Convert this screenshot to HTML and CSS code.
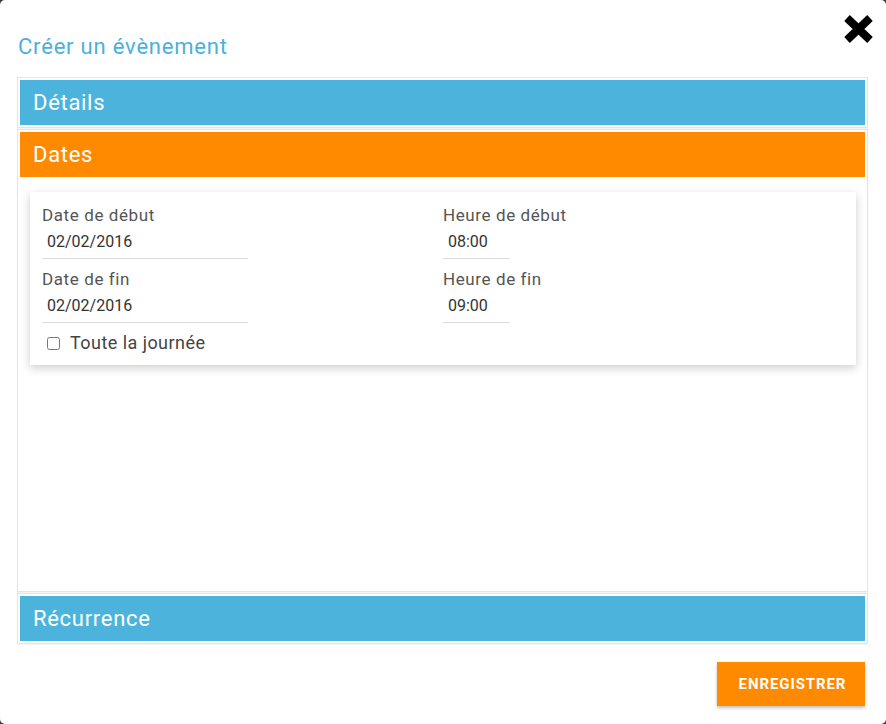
FILE: index.html
```html
<!DOCTYPE html>
<html lang="fr">
<head>
<meta charset="utf-8">
<title>Créer un évènement</title>
<link rel="stylesheet" href="styles.css">
</head>
<body>
<div class="modal">
  <button class="close" aria-label="Fermer">
    <svg width="31" height="30" viewBox="0 0 31 30"><path d="M4 4 L27 26 M27 4 L4 26" stroke="#000" stroke-width="8" fill="none"/></svg>
  </button>
  <h1 class="title">Créer un évènement</h1>
  <div class="panels">
    <section class="panel">
      <div class="panel-heading blue">Détails</div>
    </section>
    <section class="panel">
      <div class="panel-heading orange">Dates</div>
      <div class="panel-body">
        <div class="card">
          <div class="col">
            <div class="field">
              <div class="label">Date de début</div>
              <div class="input date">02/02/2016</div>
            </div>
            <div class="field last">
              <div class="label">Date de fin</div>
              <div class="input date">02/02/2016</div>
            </div>
            <label class="check"><input type="checkbox"><span>Toute la journée</span></label>
          </div>
          <div class="col">
            <div class="field">
              <div class="label">Heure de début</div>
              <div class="input time">08:00</div>
            </div>
            <div class="field last">
              <div class="label">Heure de fin</div>
              <div class="input time">09:00</div>
            </div>
          </div>
        </div>
      </div>
    </section>
    <section class="panel">
      <div class="panel-heading blue">Récurrence</div>
    </section>
  </div>
  <div class="actions">
    <button class="save">ENREGISTRER</button>
  </div>
</div>
</body>
</html>
```

FILE: styles.css
```css
* { box-sizing: border-box; }
html, body { margin: 0; padding: 0; }
body {
  background: #3a3a3a;
  font-family: Roboto, "Liberation Sans", sans-serif;
  width: 886px;
  height: 724px;
  overflow: hidden;
}
.modal {
  position: relative;
  width: 886px;
  height: 724px;
  background: #fff;
  border-radius: 5px;
  padding-top: 32px;
}
.close {
  position: absolute;
  top: 14px;
  right: 12px;
  border: 0;
  background: transparent;
  padding: 0;
  width: 31px;
  height: 30px;
}
.close svg { display: block; }
.title {
  margin: 0 0 15px 18px;
  font-size: 22px;
  line-height: 30px;
  font-weight: 400;
  letter-spacing: 0.8px;
  color: #4ab1dc;
}
.panels {
  margin-left: 17px;
  width: 851px;
}
.panel {
  border: 1px solid #e4e4e4;
  padding: 2px;
  margin-bottom: 1px;
  box-shadow: 0 1px 1px rgba(0,0,0,0.04);
}
.panel-heading {
  height: 45px;
  line-height: 45px;
  padding-left: 13px;
  color: #fff;
  font-size: 22px;
  letter-spacing: 0.7px;
}
.blue { background: #4cb3dc; }
.orange { background: #ff8a00; }
.panel-body {
  height: 412px;
  padding: 15px 9px 0 10px;
}
.card {
  display: grid;
  grid-template-columns: 1fr 1fr;
  padding: 13px 12px 12px 12px;
  background: #fff;
  box-shadow: 0 3px 9px rgba(0,0,0,0.2);
}
.field { margin-bottom: 10px; }
.field.last { margin-bottom: 0; }
.label {
  font-size: 17px;
  line-height: 20px;
  color: #555;
  letter-spacing: 0.6px;
}
.input {
  height: 34px;
  line-height: 33px;
  padding-left: 5px;
  border-bottom: 1px solid #dcdcdc;
  font-size: 16px;
  color: #333;
}
.input.date { width: 206px; }
.input.time { width: 67px; }
.check {
  display: flex;
  align-items: center;
  padding-top: 10px;
  padding-left: 5px;
  height: 30px;
  font-size: 18px;
  line-height: 20px;
  letter-spacing: 0.45px;
  color: #444;
}
.check input {
  margin: 0 10px 0 0;
  width: 13px;
  height: 13px;
}
.actions {
  display: flex;
  justify-content: flex-end;
  padding-right: 21px;
  margin-top: 18px;
}
.save {
  width: 148px;
  height: 44px;
  border: 0;
  background: #ff8a00;
  color: #fff;
  font-family: Roboto, "Liberation Sans", sans-serif;
  font-weight: 700;
  font-size: 15px;
  letter-spacing: 0.9px;
  padding: 0 0 0 3px;
  box-shadow: 0 2px 3px rgba(0,0,0,0.25);
}
```
